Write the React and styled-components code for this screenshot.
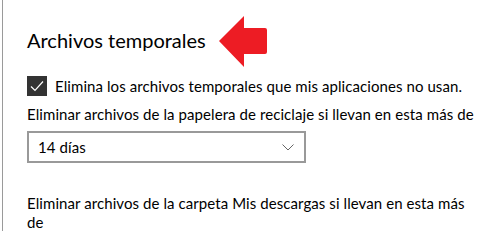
import React from 'react';
import styled, { createGlobalStyle } from 'styled-components';

const GlobalStyle = createGlobalStyle`
  html, body {
    margin: 0;
    padding: 0;
    background: #ffffff;
  }
  body {
    font-family: 'Lato', 'Liberation Sans', sans-serif;
    color: #000000;
  }
`;

const Page = styled.div`
  width: 502px;
  height: 231px;
  overflow: hidden;
  padding-left: 2px;
  box-sizing: border-box;
`;

const Panel = styled.div`
  height: 100%;
  border-left: 1px solid #9a9a9a;
  padding: 26px 0 0 24px;
  box-sizing: border-box;
  width: 474px;
`;

const HeadingRow = styled.div`
  display: flex;
  align-items: center;
  gap: 13px;
  height: 28px;
  margin-bottom: 22px;
`;

const Heading = styled.h2`
  margin: 0;
  font-size: 20px;
  font-weight: 400;
  line-height: 28px;
  color: #000;
`;

const Arrow = styled.svg`
  flex: none;
  margin-top: 4px;
`;

const CheckRow = styled.label`
  display: flex;
  align-items: center;
  gap: 8px;
  height: 20px;
`;

const Box = styled.span`
  width: 20px;
  height: 20px;
  background: #333333;
  display: flex;
  align-items: center;
  justify-content: center;
  flex: none;
`;

const Text = styled.p`
  margin: ${(p) => p.$mt || 0}px 0 0;
  font-size: 15px;
  letter-spacing: 0.08px;
  line-height: 19px;
  color: #000;
`;

const Select = styled.div`
  margin-top: 7px;
  width: 279px;
  height: 32px;
  box-sizing: border-box;
  border: 2px solid #999999;
  display: flex;
  align-items: center;
  justify-content: space-between;
  padding: 0 10px 0 9px;
  font-size: 15px;
  letter-spacing: 0.08px;
`;

function App() {
  return (
    <>
      <GlobalStyle />
      <Page>
        <Panel>
          <HeadingRow>
            <Heading>Archivos temporales</Heading>
            <Arrow width="48" height="53" viewBox="0 0 48 53">
              <path
                d="M0 25 L25 0 L25 12 L46 12 Q48 12 48 14 L48 36 Q48 38 46 38 L25 38 L25 51 Z"
                fill="#ed1c24"
              />
            </Arrow>
          </HeadingRow>
          <CheckRow>
            <Box>
              <svg width="14" height="12" viewBox="0 0 14 12">
                <path d="M1 6.5 L5 10.5 L13 1.5" fill="none" stroke="#fff" strokeWidth="1.2" />
              </svg>
            </Box>
            <Text>Elimina los archivos temporales que mis aplicaciones no usan.</Text>
          </CheckRow>
          <Text $mt={9}>Eliminar archivos de la papelera de reciclaje si llevan en esta más de</Text>
          <Select>
            <span>14 días</span>
            <svg width="12" height="7" viewBox="0 0 12 7">
              <path d="M0.5 0.5 L6 6 L11.5 0.5" fill="none" stroke="#666" strokeWidth="1" />
            </svg>
          </Select>
          <Text $mt={31}>Eliminar archivos de la carpeta Mis descargas si llevan en esta más de</Text>
        </Panel>
      </Page>
    </>
  );
}

export default App;
